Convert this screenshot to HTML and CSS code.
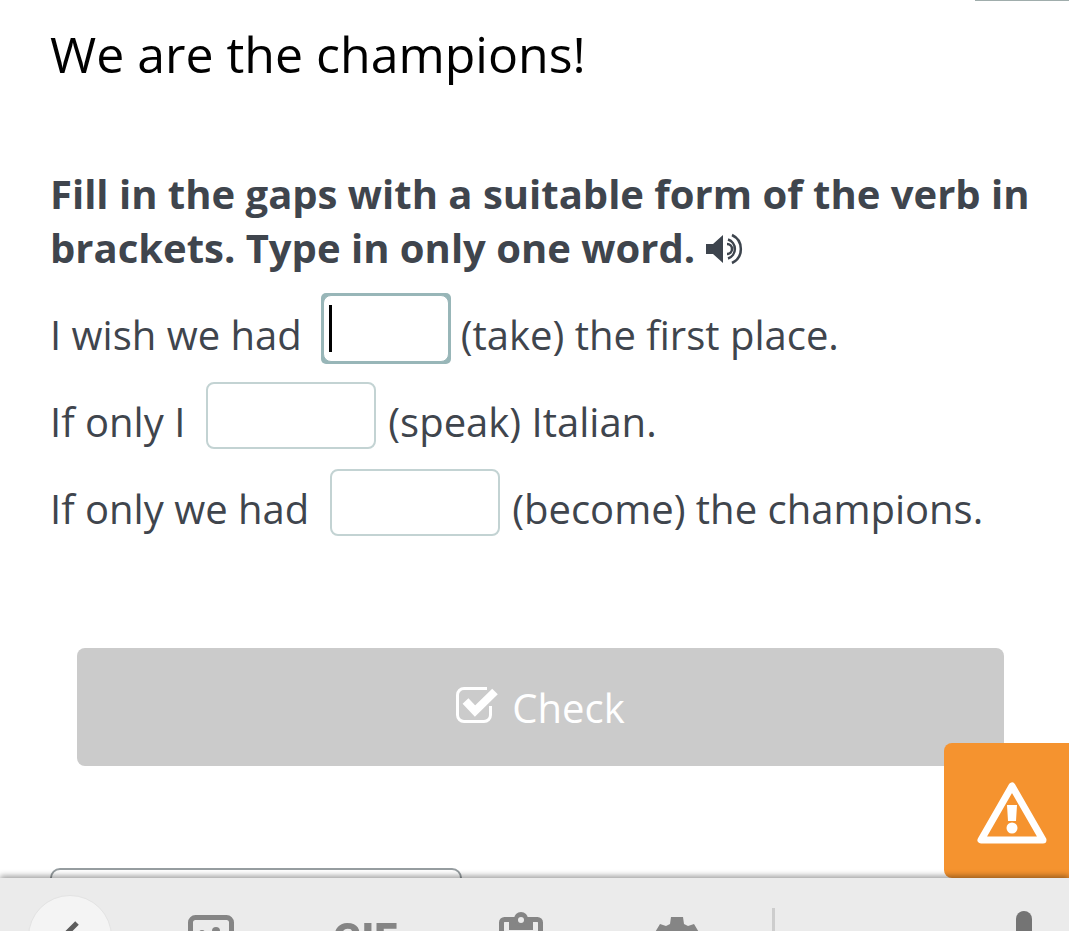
FILE: index.html
```html
<!DOCTYPE html>
<html lang="en">
<head>
    <meta charset="UTF-8">
    <meta name="viewport" content="width=device-width, initial-scale=1.0">
    <title>We are the champions!</title>
    <link rel="stylesheet" href="styles.css">
</head>
<body>
    <div class="top-edge"><div class="top-tab"></div></div>
    <main class="container">
        <h1>We are the champions!</h1>
        <form class="exercise">
            <h2>Fill in the gaps with a suitable form of the verb in brackets. Type in only one word.
                <button type="button" class="sound" aria-label="Listen">
                    <svg width="38" height="32" viewBox="0 0 38 32">
                        <path d="M0 11h7L17 2v28L7 21H0z" fill="#3d444d"/>
                        <path d="M21 11a5 5 0 0 1 0 10M22 6.500a10 10 0 0 1 0 19M26 2a15.500 15.500 0 0 1 0 28" fill="none" stroke="#3d444d" stroke-width="2.500"/>
                    </svg>
                </button>
            </h2>
            <div class="row">
                <label for="gap1">I wish we had</label>
                <span class="gap active">
                    <input type="text" id="gap1" name="gap1">
                    <span class="caret"></span>
                </span>
                <span>(take) the first place.</span>
            </div>
            <div class="row">
                <label for="gap2">If only I</label>
                <span class="gap"><input type="text" id="gap2" name="gap2"></span>
                <span>(speak) Italian.</span>
            </div>
            <div class="row">
                <label for="gap3">If only we had</label>
                <span class="gap"><input type="text" id="gap3" name="gap3"></span>
                <span>(become) the champions.</span>
            </div>
            <button type="button" class="check">
                <svg width="42" height="40" viewBox="0 0 42 40">
                    <path d="M31 1.500H8A6.500 6.500 0 0 0 1.500 8v20A6.500 6.500 0 0 0 8 34.500h20a6.500 6.500 0 0 0 6.500-6.500v-9" fill="none" stroke="#fff" stroke-width="3"/>
                    <path d="M9.500 14L19 24 39 4.500" fill="none" stroke="#fff" stroke-width="8"/>
                </svg>
                Check
            </button>
        </form>
        <button type="button" class="next" aria-label="Next"></button>
    </main>

    <button type="button" class="report" aria-label="Report a problem">
        <svg width="72" height="64" viewBox="0 0 72 64">
            <path d="M36 5L5 59h62z" fill="none" stroke="#fff" stroke-width="7" stroke-linejoin="round"/>
            <path d="M31 24h10l-1 16h-8z" fill="#fff"/>
            <circle cx="36" cy="47" r="5.500" fill="#fff"/>
        </svg>
    </button>

    <div class="keyboard">
        <button type="button" class="back" aria-label="Back">
            <svg width="24" height="32" viewBox="0 0 24 32">
                <path d="M19 2L4 17l15 15" fill="none" stroke="#5c5c5c" stroke-width="5"/>
            </svg>
        </button>
        <button type="button" class="tool" aria-label="Stickers">
            <svg width="46" height="50" viewBox="0 -4 46 50">
                <rect x="2.500" y="2.500" width="41" height="41" rx="5" fill="none" stroke="#858585" stroke-width="5"/>
                <circle cx="14" cy="18" r="3" fill="#858585"/>
                <circle cx="28" cy="16" r="4" fill="#858585"/>
                <path d="M12 28q11 12 22 0" fill="none" stroke="#858585" stroke-width="4"/>
            </svg>
        </button>
        <button type="button" class="tool gif">GIF</button>
        <button type="button" class="tool" aria-label="Clipboard">
            <svg width="44" height="50" viewBox="0 0 44 50">
                <rect x="2.500" y="8.500" width="39" height="39" rx="3" fill="none" stroke="#858585" stroke-width="5"/>
                <path d="M10 7h24v12H10z" fill="#858585"/>
                <circle cx="22" cy="8" r="7" fill="#858585"/>
                <circle cx="22" cy="9" r="3" fill="#ebebeb"/>
            </svg>
        </button>
        <button type="button" class="tool" aria-label="Settings">
            <svg width="48" height="54" viewBox="0 -6 48 54">
                <path d="M18 0h12l1 7 4 2 6-2 6 10-5 4v6l5 4-6 10-6-2-4 2-1 7H18l-1-7-4-2-6 2L1 31l5-4v-6l-5-4L7 7l6 2 4-2z" fill="#858585"/>
                <circle cx="24" cy="24" r="10" fill="#ebebeb"/>
            </svg>
        </button>
        <span class="divider"></span>
        <span></span>
        <button type="button" class="tool" aria-label="Voice input">
            <svg width="34" height="52" viewBox="0 0 34 52">
                <rect x="9" y="0" width="16" height="32" rx="8" fill="#747474"/>
                <path d="M3 24a14 14 0 0 0 28 0M17 38v12" fill="none" stroke="#747474" stroke-width="4"/>
            </svg>
        </button>
    </div>
</body>
</html>
```
FILE: styles.css
```css
* {
    box-sizing: border-box;
}

body {
    font-family: "Open Sans", sans-serif;
    background-color: #fff;
    color: #3f454d;
    margin: 0;
    height: 100vh;
    overflow: hidden;
}

button {
    border: none;
    padding: 0;
    background: none;
    font-family: inherit;
    cursor: pointer;
}

svg {
    display: block;
}

.top-edge {
    display: flex;
    justify-content: flex-end;
}

.top-tab {
    width: 94px;
    height: 1px;
    background: #a0adac;
}

.container {
    padding: 19px 38px 0 50px;
}

h1 {
    margin: 0;
    color: #000;
    font-size: 50px;
    line-height: 68px;
    font-weight: 400;
}

h2 {
    margin: 79px 0 20px;
    font-size: 40px;
    line-height: 54px;
    font-weight: 700;
}

.sound {
    display: inline-block;
    vertical-align: -2px;
}

.row {
    display: flex;
    align-items: flex-end;
    margin-bottom: 20px;
    font-size: 40px;
    line-height: 54px;
    white-space: nowrap;
}

.gap {
    position: relative;
    margin: 0 12px 0 21px;
    border-radius: 3px;
}

.gap input {
    display: block;
    width: 170px;
    height: 67px;
    padding: 0 8px;
    border: 2px solid #c3d3d3;
    border-radius: 8px;
    background: #fff;
    color: inherit;
    font: inherit;
    outline: none;
}

.gap.active {
    background: #98b6b8;
    box-shadow: 0 0 0 2px #98b6b8;
}

.gap.active input {
    width: 126px;
    border: 1px solid #98b6b8;
}

.caret {
    position: absolute;
    left: 6px;
    top: 10px;
    width: 3px;
    height: 47px;
    background: #000;
}

.check {
    display: flex;
    align-items: center;
    justify-content: center;
    gap: 14px;
    width: calc(100% - 54px);
    height: 118px;
    margin: 112px 0 0 27px;
    border-radius: 8px;
    background: #cbcbcb;
    color: #fff;
    font-size: 40px;
}

.next {
    display: block;
    width: 412px;
    height: 80px;
    margin-top: 102px;
    border: 2px solid #969da0;
    border-radius: 10px;
}

.report {
    position: fixed;
    right: 0;
    bottom: 53px;
    width: 125px;
    height: 135px;
    padding: 4px 0 0 32px;
    border-radius: 8px 0 0 8px;
    background: #f5932f;
}

.keyboard {
    position: fixed;
    left: 0;
    right: 0;
    bottom: 0;
    height: 53px;
    display: grid;
    grid-template-columns: 140fr 142fr 166fr 146fr 166fr 27fr 191fr 91fr;
    justify-items: center;
    align-items: start;
    background: #ebebeb;
    box-shadow: 0 -2px 6px rgba(0, 0, 0, 0.4);
    clip-path: inset(-12px 0 0 0);
}

.back {
    display: flex;
    align-items: center;
    justify-content: center;
    width: 84px;
    height: 84px;
    margin-top: 17px;
    border: 1px solid #e3e3e3;
    border-radius: 50%;
    background: #f4f4f4;
}

.tool {
    margin-top: 33px;
}

.gif {
    color: #858585;
    font-family: Roboto, sans-serif;
    font-size: 42px;
    line-height: 56px;
    font-weight: 900;
}

.divider {
    width: 3px;
    height: 60px;
    margin-top: 30px;
    background: #cdcdcd;
}
```
